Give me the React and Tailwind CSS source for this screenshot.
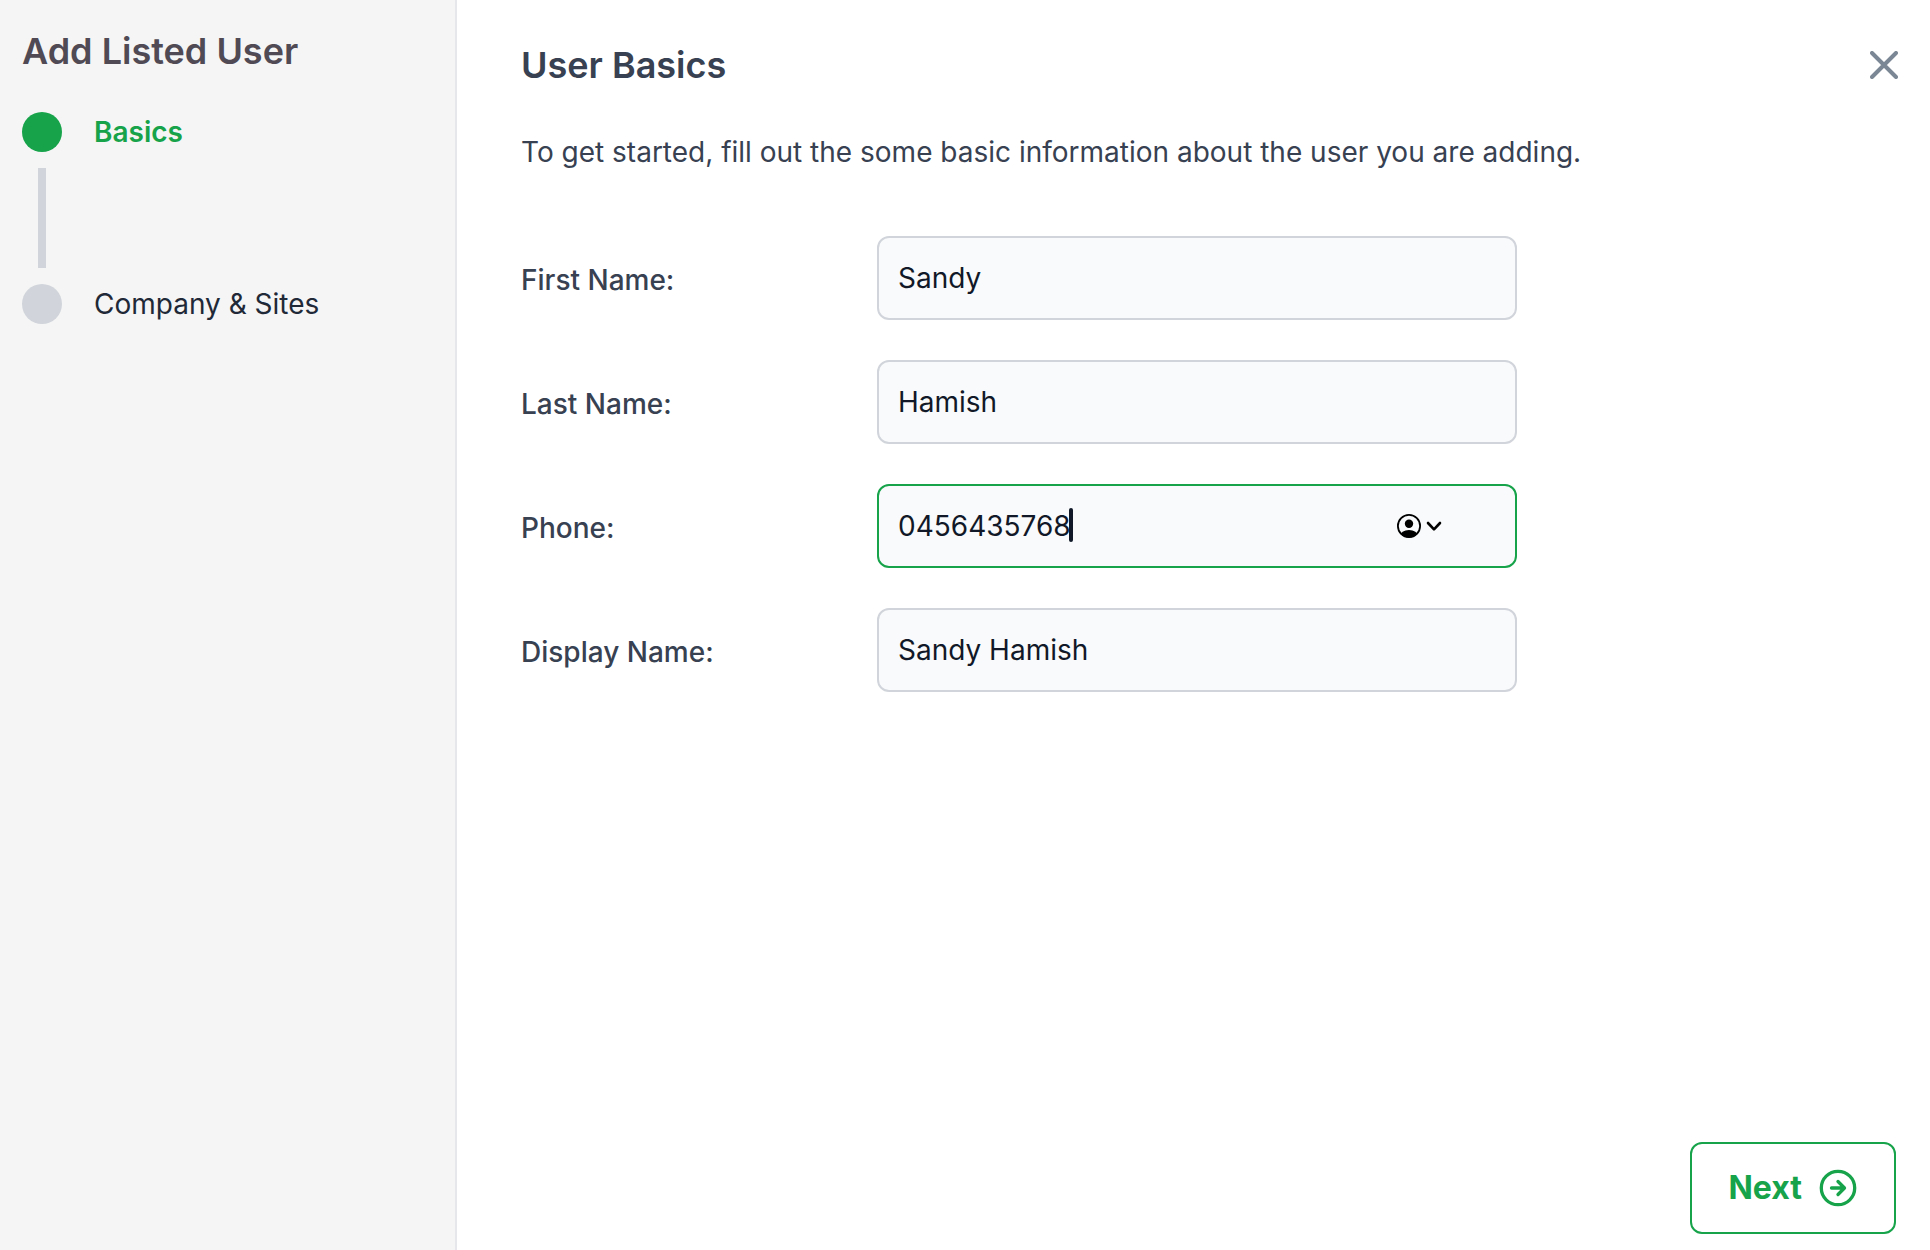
import React, { useState } from "react";

const steps = [
  { label: "Basics", active: true },
  { label: "Company & Sites", active: false },
];

const fields = [
  { id: "first-name", label: "First Name:", value: "Sandy" },
  { id: "last-name", label: "Last Name:", value: "Hamish" },
  { id: "phone", label: "Phone:", value: "0456435768", active: true },
  { id: "display-name", label: "Display Name:", value: "Sandy Hamish" },
];

function CloseIcon() {
  return (
    <svg className="size-7" viewBox="0 0 28 28" fill="none" stroke="currentColor" strokeWidth="4" strokeLinecap="round" aria-hidden="true">
      <path d="M2 2l24 24M26 2L2 26" />
    </svg>
  );
}

function ArrowCircleIcon() {
  return (
    <svg className="size-10" viewBox="0 0 40 40" fill="none" stroke="currentColor" strokeWidth="3.3" strokeLinecap="round" strokeLinejoin="round" aria-hidden="true">
      <circle cx="20" cy="20" r="16.7" />
      <path d="M13.5 20h13M20 13.5l6.5 6.5-6.5 6.5" />
    </svg>
  );
}

function ContactIcon() {
  return (
    <svg className="size-6" viewBox="0 0 24 24" aria-hidden="true">
      <defs>
        <clipPath id="contact-disc">
          <circle cx="12" cy="12" r="11.5" />
        </clipPath>
      </defs>
      <circle cx="12" cy="12" r="11.1" fill="none" stroke="black" strokeWidth="1.8" />
      <circle cx="12" cy="9.7" r="4.2" fill="black" />
      <ellipse cx="12" cy="22" rx="9" ry="6" fill="black" clipPath="url(#contact-disc)" />
    </svg>
  );
}

function ChevronIcon() {
  return (
    <svg className="h-3 w-4" viewBox="0 0 16 12" fill="none" stroke="black" strokeWidth="2.6" strokeLinecap="round" strokeLinejoin="round" aria-hidden="true">
      <path d="M2 3l6 6.4L14 3" />
    </svg>
  );
}

function Field({ field }) {
  const [value, setValue] = useState(field.value);
  return (
    <div className="flex items-center">
      <label htmlFor={field.id} className="w-[356px] shrink-0 pt-1 text-[28px] leading-10 font-medium text-[#374151]">
        {field.label}
      </label>
      <div className="relative w-full max-w-[640px]">
        <input
          id={field.id}
          type="text"
          value={value}
          onChange={(e) => setValue(e.target.value)}
          className={
            field.active
              ? "block w-full rounded-xl border-2 border-[#16a34a] bg-[#f9fafb] px-[19px] py-5 text-[28px] leading-10 text-[#111827] outline-none"
              : "block w-full rounded-xl border-2 border-[#d1d5db] bg-[#f9fafb] px-[19px] py-5 text-[28px] leading-10 text-[#111827] outline-none"
          }
        />
        {field.active && (
          <>
            <span className="absolute top-6 left-48 h-[34px] w-1 rounded-sm bg-[#111827]" />
            <button type="button" aria-label="Fill from contacts" className="absolute inset-y-0 right-[75px] flex items-center gap-[5px]">
              <ContactIcon />
              <ChevronIcon />
            </button>
          </>
        )}
      </div>
    </div>
  );
}

export default function App() {
  return (
    <div className="flex min-h-screen bg-white font-['Inter',sans-serif]">
      <aside className="w-[457px] shrink-0 border-r-2 border-[#e5e7eb] bg-[#f5f5f5] px-[22px] pt-[26px]">
        <h1 className="text-4xl leading-[50px] font-semibold text-[#4f4a54]">Add Listed User</h1>
        <ol className="mt-9">
          {steps.map((step, i) => (
            <li key={step.label}>
              {i > 0 && <div className="my-4 ml-4 h-[100px] w-2 bg-[#d1d5db]" />}
              <div className="flex items-center gap-8">
                <span className={step.active ? "size-10 rounded-full bg-[#16a34a]" : "size-10 rounded-full bg-[#d1d5db]"} />
                <span className={step.active ? "text-[28px] leading-10 font-semibold text-[#16a34a]" : "text-[28px] leading-10 text-[#1f2937]"}>
                  {step.label}
                </span>
              </div>
            </li>
          ))}
        </ol>
      </aside>

      <main className="flex flex-1 flex-col pt-10 pr-8 pb-4 pl-16">
        <header className="flex items-center justify-between">
          <h2 className="text-4xl leading-[50px] font-semibold text-[#374151]">User Basics</h2>
          <button type="button" aria-label="Close" className="text-[#7b8794]">
            <CloseIcon />
          </button>
        </header>
        <p className="mt-[42px] text-[28px] leading-10 text-[#374151]">
          To get started, fill out the some basic information about the user you are adding.
        </p>
        <form id="user-basics" className="mt-16 flex flex-col gap-10">
          {fields.map((field) => (
            <Field key={field.id} field={field} />
          ))}
        </form>
        <footer className="mt-auto flex justify-end pr-0.5">
          <button
            type="button"
            className="flex items-center gap-4 rounded-xl border-2 border-[#16a34a] px-9 py-6 text-[32px] leading-10 font-bold text-[#16a34a]"
          >
            Next
            <ArrowCircleIcon />
          </button>
        </footer>
      </main>
    </div>
  );
}
